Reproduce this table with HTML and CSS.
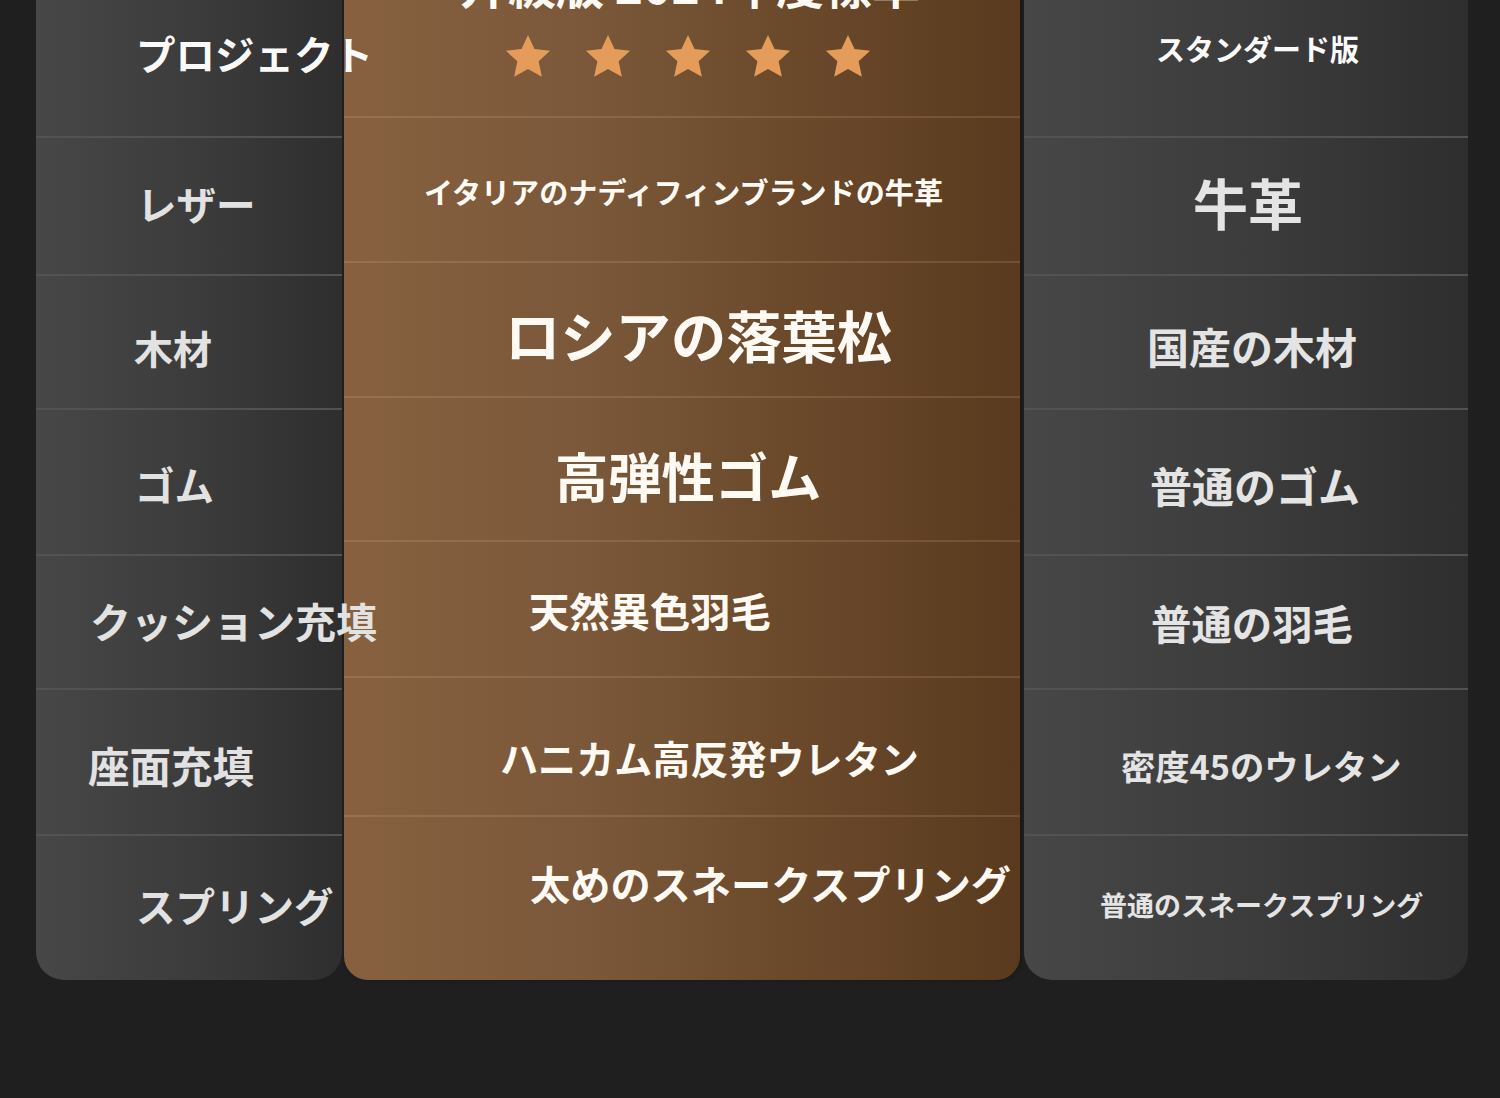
FILE: index.html
```html
<!DOCTYPE html>
<html lang="ja">
<head>
<meta charset="utf-8">
<title>比較表</title>
<link rel="stylesheet" href="styles.css">
</head>
<body>
<div class="table">
  <div class="col side left">
    <div class="row"><span class="txt l1">プロジェクト</span></div>
    <div class="row"><span class="txt l2">レザー</span></div>
    <div class="row"><span class="txt l3">木材</span></div>
    <div class="row"><span class="txt l4">ゴム</span></div>
    <div class="row"><span class="txt l5">クッション充填</span></div>
    <div class="row"><span class="txt l6">座面充填</span></div>
    <div class="row"><span class="txt l7">スプリング</span></div>
  </div>
  <div class="col mid">
    <div class="row head">
      <span class="title">升級版 2024年度標準</span>
      <div class="stars">
        <svg viewBox="0 0 24 24"><path d="M12 1.8l3 6.5 7.2.8-5.3 4.9 1.5 7.1L12 17.5l-6.4 3.6 1.5-7.1L1.8 9.1 9 8.3z"/></svg>
        <svg viewBox="0 0 24 24"><path d="M12 1.8l3 6.5 7.2.8-5.3 4.9 1.5 7.1L12 17.5l-6.4 3.6 1.5-7.1L1.8 9.1 9 8.3z"/></svg>
        <svg viewBox="0 0 24 24"><path d="M12 1.8l3 6.5 7.2.8-5.3 4.9 1.5 7.1L12 17.5l-6.4 3.6 1.5-7.1L1.8 9.1 9 8.3z"/></svg>
        <svg viewBox="0 0 24 24"><path d="M12 1.8l3 6.5 7.2.8-5.3 4.9 1.5 7.1L12 17.5l-6.4 3.6 1.5-7.1L1.8 9.1 9 8.3z"/></svg>
        <svg viewBox="0 0 24 24"><path d="M12 1.8l3 6.5 7.2.8-5.3 4.9 1.5 7.1L12 17.5l-6.4 3.6 1.5-7.1L1.8 9.1 9 8.3z"/></svg>
      </div>
    </div>
    <div class="row"><span class="txt m2">イタリアのナディフィンブランドの牛革</span></div>
    <div class="row"><span class="txt m3">ロシアの落葉松</span></div>
    <div class="row"><span class="txt m4">高弾性ゴム</span></div>
    <div class="row"><span class="txt m5">天然異色羽毛</span></div>
    <div class="row"><span class="txt m6">ハニカム高反発ウレタン</span></div>
    <div class="row"><span class="txt m7">太めのスネークスプリング</span></div>
  </div>
  <div class="col side right">
    <div class="row"><span class="txt r1">スタンダード版</span></div>
    <div class="row"><span class="txt r2">牛革</span></div>
    <div class="row"><span class="txt r3">国産の木材</span></div>
    <div class="row"><span class="txt r4">普通のゴム</span></div>
    <div class="row"><span class="txt r5">普通の羽毛</span></div>
    <div class="row"><span class="txt r6">密度45のウレタン</span></div>
    <div class="row"><span class="txt r7">普通のスネークスプリング</span></div>
  </div>
</div>
</body>
</html>
```

FILE: styles.css
```css
html, body {
  margin: 0;
  padding: 0;
  background: #1f1f1f;
  height: 100%;
  overflow: hidden;
}
body {
  font-family: "Noto Sans CJK JP", "Noto Sans", sans-serif;
  font-weight: 700;
}
.table {
  display: flex;
  align-items: flex-start;
  margin-top: -60px;
  padding-left: 36px;
}
.col {
  display: flex;
  flex-direction: column;
  border-radius: 0 0 28px 28px;
}
.left {
  width: 306px;
  margin-right: 2px;
  position: relative;
  z-index: 1;
  background: linear-gradient(90deg, #474747 0%, #3b3b3b 55%, #2e2e2e 100%);
}
.mid {
  width: 676px;
  margin-right: 4px;
  background: linear-gradient(90deg, #87613f 0%, #7b583a 35%, #6b4a2c 65%, #5a3a1e 100%);
  border-radius: 0 0 24px 24px;
  box-shadow: 2px 0 4px rgba(0, 0, 0, 0.25);
}
.right {
  width: 444px;
  background: linear-gradient(90deg, #474747 0%, #3b3b3b 55%, #2e2e2e 100%);
}
.row {
  box-sizing: border-box;
  display: flex;
  align-items: center;
  border-top: 2px solid #525252;
}
.row:first-child { border-top: none; }
.mid .row { border-top-color: rgba(255, 214, 170, 0.14); }

.side .row:nth-child(1) { height: 196px; }
.side .row:nth-child(2) { height: 138px; }
.side .row:nth-child(3) { height: 134px; }
.side .row:nth-child(4) { height: 146px; }
.side .row:nth-child(5) { height: 134px; }
.side .row:nth-child(6) { height: 146px; }
.side .row:nth-child(7) { height: 146px; }

.mid .row:nth-child(1) { height: 176px; }
.mid .row:nth-child(2) { height: 145px; }
.mid .row:nth-child(3) { height: 135px; }
.mid .row:nth-child(4) { height: 144px; }
.mid .row:nth-child(5) { height: 136px; }
.mid .row:nth-child(6) { height: 139px; }
.mid .row:nth-child(7) { height: 165px; }

.txt {
  display: block;
  white-space: nowrap;
  line-height: 1;
}
.left .txt { color: #e2e2e2; }
.right .txt { color: #e4e4e4; }
.mid .txt { color: #fffaf3; }

/* left column */
.l1 { font-size: 39.5px; margin-left: 100px; margin-top: 30px; color: #fafafa !important; }
.l2 { font-size: 39.5px; margin-left: 101px; margin-bottom: 6px; }
.l3 { font-size: 39px; margin-left: 98px; margin-top: 10px; }
.l4 { font-size: 39.5px; margin-left: 99px; margin-top: 4px; }
.l5 { font-size: 41px; margin-left: 54px; margin-bottom: 3px; }
.l6 { font-size: 41.5px; margin-left: 52px; margin-top: 7px; }
.l7 { font-size: 39.5px; margin-left: 100px; margin-bottom: 6px; }

/* middle column */
.head {
  flex-direction: column;
  align-items: center;
  justify-content: flex-start;
  padding-top: 19px;
  padding-left: 12px;
  gap: 24px;
}
.title {
  display: block;
  font-size: 48px;
  line-height: 1;
  color: #fffaf3;
  white-space: nowrap;
  margin-left: 4px;
}
.stars {
  display: flex;
  gap: 28px;
}
.stars svg {
  width: 52px;
  height: 52px;
  fill: #e59c5b;
}
.m2 { font-size: 29.1px; margin-left: 80px; margin-top: 4px; }
.m3 { font-size: 55.3px; margin-left: 161px; margin-top: 11px; }
.m4 { font-size: 53.3px; margin-left: 211px; margin-top: 12px; }
.m5 { font-size: 40.3px; margin-left: 185px; margin-top: 2px; }
.m6 { font-size: 38.1px; margin-left: 156px; margin-top: 23px; }
.m7 { font-size: 40.2px; margin-left: 186px; margin-bottom: 31px; }

/* right column */
.r1 { font-size: 29px; margin-left: 132px; margin-top: 21px; color: #fafafa !important; }
.r2 { font-size: 55px; margin-left: 169px; margin-bottom: 10px; }
.r3 { font-size: 42px; margin-left: 123px; margin-top: 7px; }
.r4 { font-size: 42px; margin-left: 126px; margin-top: 5px; }
.r5 { font-size: 40.4px; margin-left: 127px; margin-top: 2px; }
.r6 { font-size: 34.3px; margin-left: 97px; margin-top: 6px; }
.r7 { font-size: 27px; margin-left: 76px; margin-bottom: 7px; }
```
